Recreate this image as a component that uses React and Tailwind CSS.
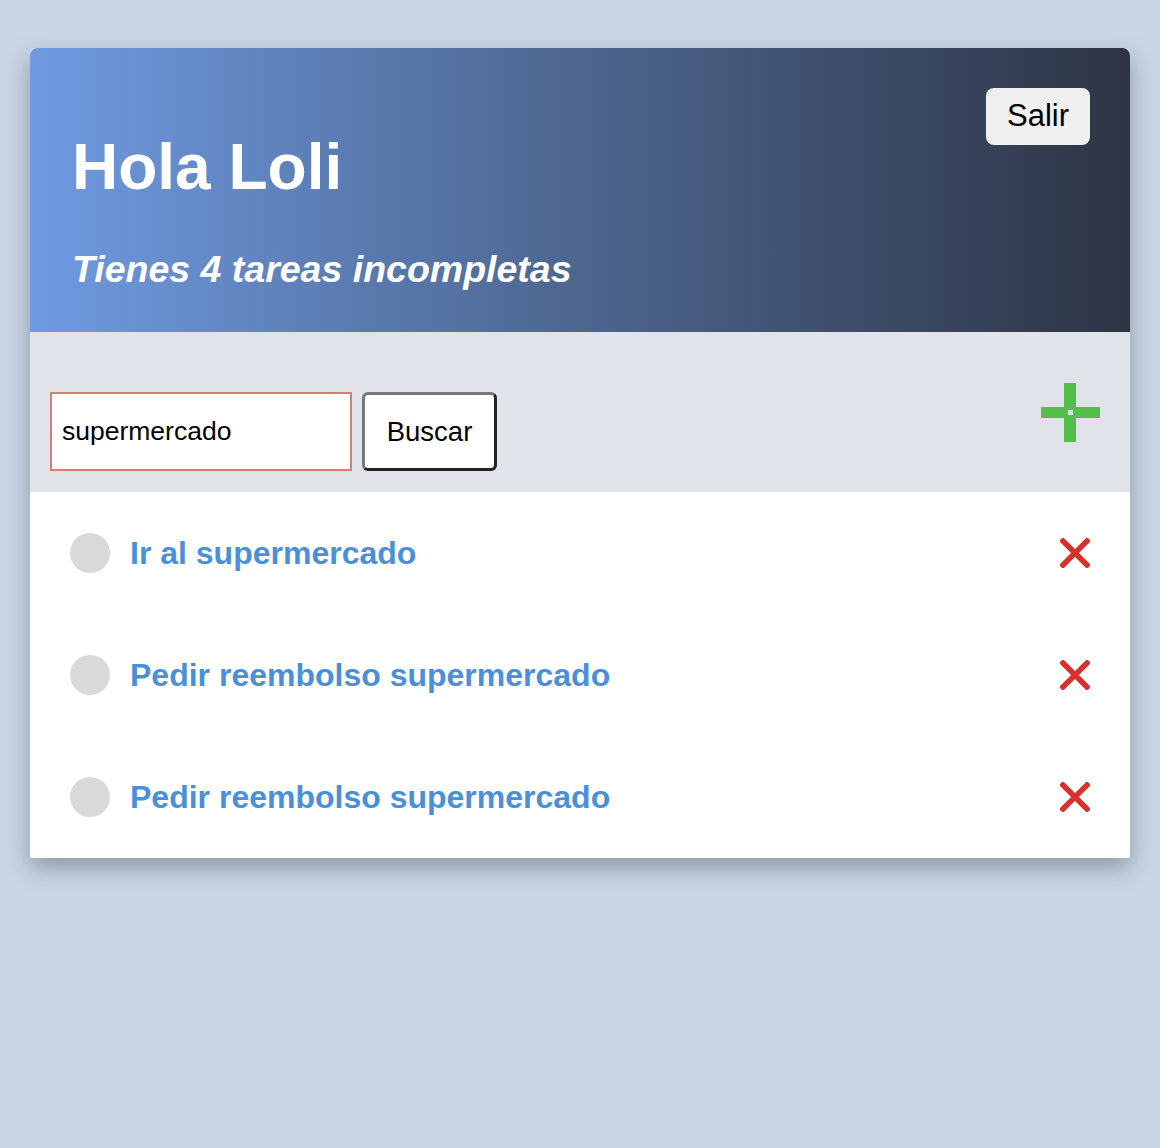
import { useState } from 'react';

const tareas = [
  { id: 1, texto: 'Ir al supermercado' },
  { id: 2, texto: 'Pedir reembolso supermercado' },
  { id: 3, texto: 'Pedir reembolso supermercado' },
];

const PlusIcon = () => (
  <svg width="60" height="60" viewBox="0 0 60 60">
    <rect x="23" y="0" width="12" height="59" fill="#54bf48" />
    <rect x="0" y="24" width="59" height="11" fill="#54bf48" />
    <rect x="27" y="27" width="5" height="5" fill="#e0e4ea" />
  </svg>
);

const CloseIcon = () => (
  <svg width="30" height="30" viewBox="0 0 30 30">
    <path d="M3 3 L27 27 M27 3 L3 27" stroke="#d8302a" strokeWidth="5.5" strokeLinecap="square" />
  </svg>
);

export default function App() {
  const [busqueda, setBusqueda] = useState('supermercado');

  return (
    <div
      className="min-h-[1148px] w-full bg-[#c9d6e5] pt-12 px-[30px]"
      style={{ fontFamily: '"Liberation Sans", Arial, sans-serif' }}
    >
      <div className="w-[1100px] shadow-[0_10px_22px_rgba(30,40,60,0.35)]">
        {/* cabecera */}
        <div className="h-[284px] rounded-t-lg bg-gradient-to-r from-[#6f9be2] to-[#2d3545] px-10 pt-10 flex justify-between">
          <div className="pl-[2px]">
            <h1 className="mt-[47px] text-[64px] leading-none font-bold text-white">Hola Loli</h1>
            <p className="mt-[52px] text-[37.5px] leading-none font-bold italic text-white">
              Tienes 4 tareas incompletas
            </p>
          </div>
          <button className="h-[57px] w-[104px] rounded-lg bg-[#efefef] text-[31px] text-black">
            Salir
          </button>
        </div>

        {/* barra de búsqueda */}
        <div className="h-[160px] bg-[#e0e4ea] px-5 pt-[60px] flex items-start">
          <input
            type="text"
            value={busqueda}
            onChange={(e) => setBusqueda(e.target.value)}
            className="h-[79px] w-[302px] border-2 border-[#d87c70] bg-white px-[10px] text-[26.5px] text-black outline-none"
          />
          <button className="ml-[10px] h-[79px] w-[135px] rounded-md border-[3px] border-[#777] border-r-[#222] border-b-[#222] bg-white text-[27.5px] text-black">
            Buscar
          </button>
          <button className="ml-auto mr-[9px] mt-[-9px]">
            <PlusIcon />
          </button>
        </div>

        {/* lista de tareas */}
        <ul className="bg-white">
          {tareas.map((t) => (
            <li key={t.id} className="h-[122px] px-10 flex items-center">
              <span className="h-10 w-10 shrink-0 rounded-full bg-[#d9d9d9]" />
              <span className="ml-5 text-[32px] font-bold text-[#4a90d9]">{t.texto}</span>
              <button className="ml-auto">
                <CloseIcon />
              </button>
            </li>
          ))}
        </ul>
      </div>
    </div>
  );
}
